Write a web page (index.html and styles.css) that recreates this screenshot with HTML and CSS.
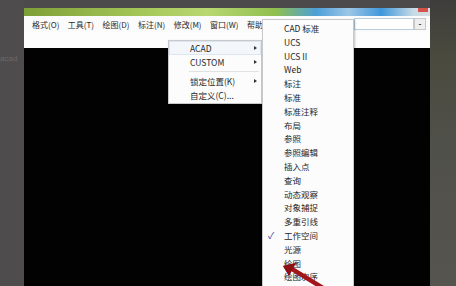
FILE: index.html
```html
<!DOCTYPE html>
<html lang="zh-CN">
<head>
    <meta charset="UTF-8">
    <title>工具栏菜单</title>
    <link rel="stylesheet" href="styles.css">
</head>
<body>
<div class="desk">
    <div class="left-bg">
        <span class="ghost">acad</span>
    </div>
    <div class="window">
        <div class="titlebar">
            <span class="close"></span>
        </div>
        <div class="menubar">
            <span class="m-item">格式(O)</span>
            <span class="m-item">工具(T)</span>
            <span class="m-item">绘图(D)</span>
            <span class="m-item">标注(N)</span>
            <span class="m-item">修改(M)</span>
            <span class="m-item">窗口(W)</span>
            <span class="m-item">帮助(H)</span>
            <div class="combo">
                <span class="combo-box"></span>
                <span class="combo-btn">-</span>
            </div>
        </div>
        <div class="toolbar"></div>
        <div class="canvas"></div>
    </div>
    <div class="right-bg"></div>

    <!-- 工具栏子菜单 -->
    <ul class="menu menu-tb">
        <li class="hover">ACAD<span class="sub-arrow"></span></li>
        <li>CUSTOM<span class="sub-arrow"></span></li>
        <li class="sep"></li>
        <li>锁定位置(K)<span class="sub-arrow"></span></li>
        <li>自定义(C)...</li>
    </ul>

    <!-- ACAD 工具栏列表 -->
    <ul class="menu menu-list">
        <li>CAD 标准</li>
        <li>UCS</li>
        <li>UCS II</li>
        <li>Web</li>
        <li>标注</li>
        <li>标准</li>
        <li>标准注释</li>
        <li>布局</li>
        <li>参照</li>
        <li>参照编辑</li>
        <li>插入点</li>
        <li>查询</li>
        <li>动态观察</li>
        <li>对象捕捉</li>
        <li>多重引线</li>
        <li><span class="check">✓</span>工作空间</li>
        <li>光源</li>
        <li>绘图</li>
        <li>绘图次序</li>
    </ul>

    <svg class="pointer" width="50" height="30" viewBox="0 0 50 30">
        <polygon points="3,5 16,2 13,6 44,25 42,29 11,10 9,15" fill="#a3161b"/>
        <polygon points="3,5 16,2 9,15" fill="#8c1015"/>
    </svg>
</div>
</body>
</html>
```

FILE: styles.css
```css
html, body{
    margin: 0;
    padding: 0;
    width: 456px;
    height: 286px;
    overflow: hidden;
    background-color: #4c4a4a;
}
.desk{
    position: relative;
    width: 456px;
    height: 286px;
    overflow: hidden;
    display: flex;
    flex-direction: row;
    font-family: "Noto Sans CJK SC", "Liberation Sans", sans-serif;
}
.left-bg{
    width: 24px;
    background-color: #4e4c4c;
    position: relative;
}
.ghost{
    display: block;
    margin-top: 54px;
    font-size: 8px;
    color: #6c6a69;
    font-family: "Liberation Sans", sans-serif;
}
.window{
    width: 406px;
    margin-top: 8px;
    display: flex;
    flex-direction: column;
}
.titlebar{
    height: 8px;
    position: relative;
    background: linear-gradient(to right, #7d9f36 0%, #a6c85a 30%, #b9d772 45%, #8fbf4e 62%, #4d9fd9 72%, #9cc7e6 80%, #3f97db 88%, #c9dbe6 96%, #d8dde0 100%);
}
.close{
    position: absolute;
    right: 2px;
    top: 0;
    width: 10px;
    height: 4px;
    background-color: #d9524a;
}
.menubar{
    height: 16px;
    background-color: #fbfbfb;
    display: flex;
    align-items: center;
    padding-left: 8px;
    gap: 8.5px;
    font-size: 8px;
    color: #2a2a2a;
}
.m-item{
    white-space: nowrap;
}
.combo{
    margin-left: auto;
    margin-right: 4px;
    display: flex;
    align-items: center;
}
.combo-box{
    width: 58px;
    height: 10px;
    border: 1px solid #b9cde0;
    background-color: #fff;
}
.combo-btn{
    width: 10px;
    height: 10px;
    border: 1px solid #c8c8c8;
    background-color: #eee;
    font-size: 8px;
    line-height: 9px;
    text-align: center;
    font-weight: bold;
}
.toolbar{
    height: 16px;
    background-color: #fdfdfd;
}
.canvas{
    flex: 1;
    background-color: #020202;
}
.right-bg{
    flex: 1;
    background: linear-gradient(to bottom, #3f3d3b 0%, #4a4a3e 20%, #50504a 50%, #56544f 100%);
}

/* меню */
.menu{
    position: absolute;
    margin: 0;
    padding: 0;
    list-style-type: none;
    background-color: #fcfcfc;
    border: 1px solid #c9c9c9;
    font-size: 8.5px;
    color: #262626;
    box-shadow: 1px 1px 2px rgba(0, 0, 0, 0.25);
}
.menu li{
    position: relative;
    white-space: nowrap;
}
.menu-tb{
    left: 168px;
    top: 40px;
    width: 92px;
    padding-bottom: 1px;
}
.menu-tb li{
    height: 14px;
    line-height: 14px;
    padding-left: 21px;
}
.menu-tb .hover{
    background-color: #f3f7fb;
    box-shadow: inset 0 0 0 1px #dbe6f2;
}
.menu-tb .sep{
    height: 1px;
    margin: 2px 2px 2px 20px;
    padding: 0;
    background-color: #e2e2e2;
}
.sub-arrow{
    position: absolute;
    right: 4px;
    top: 5px;
    width: 0;
    height: 0;
    border-top: 2px solid transparent;
    border-bottom: 2px solid transparent;
    border-left: 3px solid #333;
}
.menu-list{
    left: 262px;
    top: 19px;
    bottom: 0;
    width: 90px;
    padding-top: 2px;
    border-bottom: none;
    overflow: hidden;
}
.menu-list li{
    height: 13.8px;
    line-height: 13.8px;
    padding-left: 21px;
}
.check{
    position: absolute;
    left: 5px;
    color: #2a3ea8;
    font-size: 9px;
}
.pointer{
    position: absolute;
    left: 280px;
    top: 261px;
}
```
